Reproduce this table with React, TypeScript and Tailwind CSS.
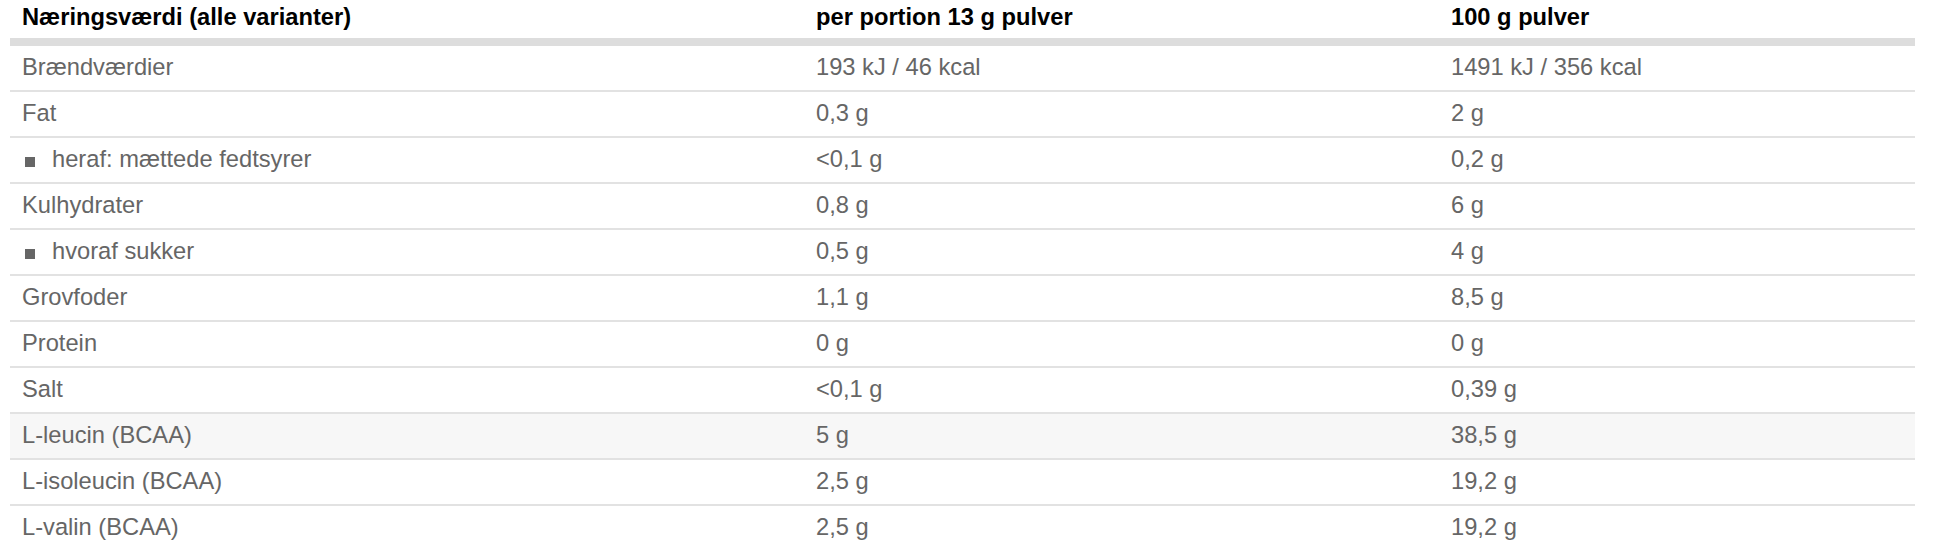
import React from "react";

const rows: { label: string; a: string; b: string; sub?: boolean; hl?: boolean }[] = [
  { label: "Brændværdier", a: "193 kJ / 46 kcal", b: "1491 kJ / 356 kcal" },
  { label: "Fat", a: "0,3 g", b: "2 g" },
  { label: "heraf: mættede fedtsyrer", a: "<0,1 g", b: "0,2 g", sub: true },
  { label: "Kulhydrater", a: "0,8 g", b: "6 g" },
  { label: "hvoraf sukker", a: "0,5 g", b: "4 g", sub: true },
  { label: "Grovfoder", a: "1,1 g", b: "8,5 g" },
  { label: "Protein", a: "0 g", b: "0 g" },
  { label: "Salt", a: "<0,1 g", b: "0,39 g" },
  { label: "L-leucin (BCAA)", a: "5 g", b: "38,5 g", hl: true },
  { label: "L-isoleucin (BCAA)", a: "2,5 g", b: "19,2 g" },
  { label: "L-valin (BCAA)", a: "2,5 g", b: "19,2 g" },
];

export default function App() {
  return (
    <div
      className="w-[1934px] h-[552px] bg-white overflow-hidden"
      style={{ fontFamily: '"Liberation Sans", Arial, Helvetica, sans-serif' }}
    >
      <div className="ml-[10px] w-[1905px] text-[23.7px]">
        <div className="grid grid-cols-[794px_635px_476px] h-[38px] items-center font-bold text-black border-b-[8px] border-[#dddddd] box-content">
          <div className="pl-[12px] -mt-[3px]">Næringsværdi (alle varianter)</div>
          <div className="pl-[12px] -mt-[3px]">per portion 13 g pulver</div>
          <div className="pl-[12px] -mt-[3px]">100 g pulver</div>
        </div>
        {rows.map((r, i) => (
          <div
            key={i}
            className={`grid grid-cols-[794px_635px_476px] h-[44px] items-center text-[#666666] box-content ${
              i < rows.length - 1 ? "border-b-2 border-[#e2e2e2]" : ""
            } ${r.hl ? "bg-[#f7f7f7]" : ""}`}
          >
            <div className="pl-[12px] flex items-baseline">
              {r.sub && (
                <span className="inline-block w-[10px] h-[10px] bg-[#666666] ml-[3px] mr-[17px]" />
              )}
              <span>{r.label}</span>
            </div>
            <div className="pl-[12px]">{r.a}</div>
            <div className="pl-[12px]">{r.b}</div>
          </div>
        ))}
      </div>
    </div>
  );
}
